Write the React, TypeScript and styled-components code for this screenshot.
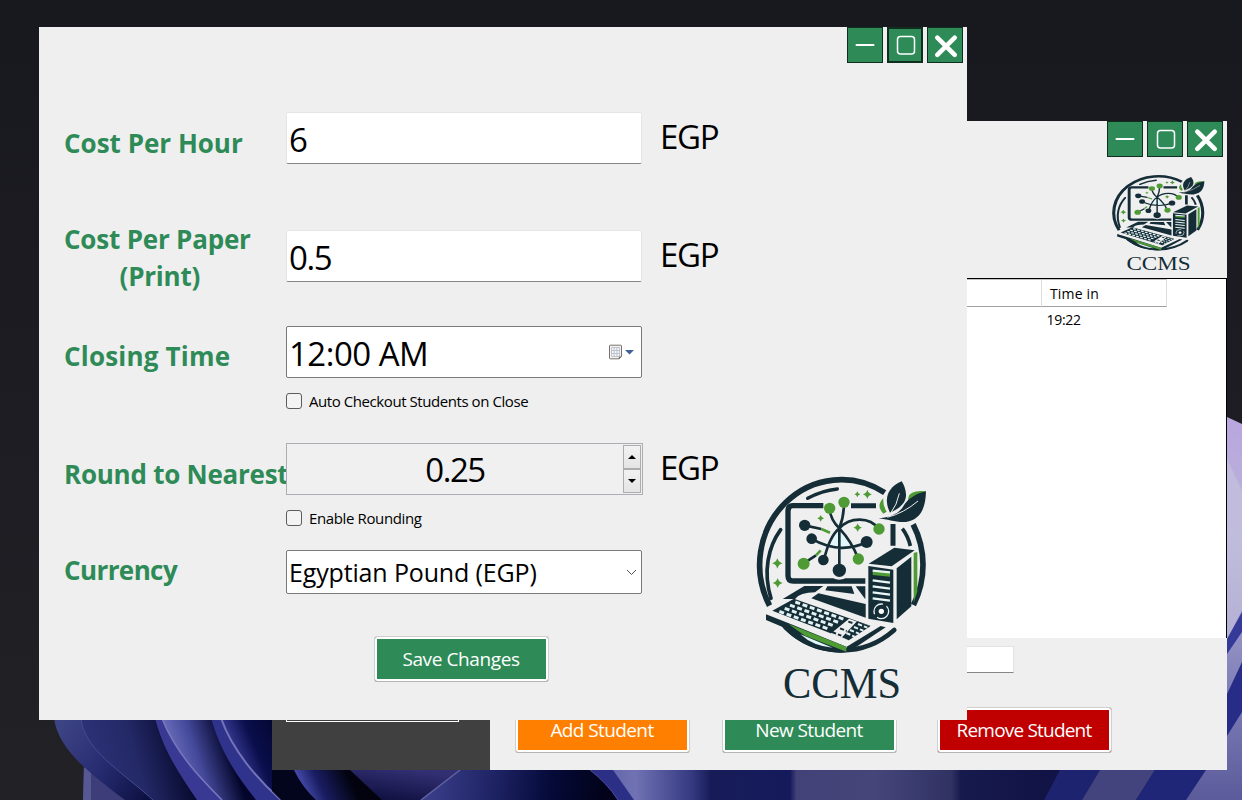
import React from "react";
import styled, { createGlobalStyle } from "styled-components";

const GlobalStyle = createGlobalStyle`
  * { box-sizing: border-box; }
  html, body { margin: 0; padding: 0; }
  body { font-family: "Open Sans", "Noto Sans", sans-serif; color: #000; background: #1c1b21; }
`;

const GREEN = "#2e8b57";
const PANEL = "#efefef";
const INK = "#142d36";
const LEAF = "#4e9a34";

const Desktop = styled.main`
  position: relative;
  width: 1242px;
  height: 800px;
  overflow: hidden;
`;

const Wallpaper = styled.svg`
  position: absolute;
  inset: 0;
`;

const SettingsWindow = styled.section`
  position: absolute;
  left: 39px;
  top: 27px;
  width: 928px;
  height: 693px;
  background: ${PANEL};
  display: flex;
  flex-direction: column;
`;

const MainWindow = styled.section`
  position: absolute;
  left: 272px;
  top: 121px;
  width: 955px;
  height: 649px;
  background: ${PANEL};
  display: flex;
`;

const CaptionBar = styled.header`
  display: flex;
  justify-content: flex-end;
  gap: 4px;
  padding-right: 4px;
  height: 36px;
  flex: none;
`;

const CaptionButton = styled.button<{ $focused?: boolean }>`
  width: 36px;
  height: 36px;
  padding: 0;
  display: block;
  border: ${(p) => (p.$focused ? 2 : 1)}px solid #0f2e1d;
  background: ${GREEN};
  svg { display: block; margin: ${(p) => (p.$focused ? 0 : 1)}px; }
`;

const SettingsBody = styled.div`
  display: flex;
  flex: 1;
  padding: 49px 27px 10px 25px;
`;

const Form = styled.form`
  width: 676px;
  display: flex;
  flex-direction: column;
`;

const FormRow = styled.div<{ $h: number; $after: number }>`
  display: grid;
  grid-template-columns: 222px 357px 1fr;
  grid-template-rows: ${(p) => p.$h}px;
  height: ${(p) => p.$h}px;
  margin-bottom: ${(p) => p.$after}px;
`;

const Label = styled.label<{ $track?: number; $drop?: number; $lift?: number }>`
  align-self: center;
  justify-self: start;
  color: ${GREEN};
  font-weight: 700;
  font-size: 26px;
  line-height: 37px;
  text-align: center;
  white-space: pre;
  letter-spacing: ${(p) => p.$track ?? 0}px;
  padding-top: ${(p) => p.$drop ?? 0}px;
  padding-bottom: ${(p) => p.$lift ?? 0}px;
`;

const SecondLine = styled.span`
  display: block;
  padding-left: 5px;
`;

const Unit = styled.span`
  align-self: center;
  padding: 0 0 2px 17px;
  font-size: 33px;
  line-height: 44px;
  letter-spacing: -1.3px;
`;

const Field = styled.div<{ $variant: "line" | "box" | "spin"; $size?: number; $track?: number; $top?: number }>`
  width: ${(p) => (p.$variant === "spin" ? 357 : 356)}px;
  height: 100%;
  display: flex;
  align-items: center;
  position: relative;
  white-space: pre;
  font-size: ${(p) => p.$size ?? 33}px;
  line-height: 40px;
  letter-spacing: ${(p) => p.$track ?? 0}px;
  padding: ${(p) => p.$top ?? 3}px 2px 0;
  background: ${(p) => (p.$variant === "spin" ? "#f0f0f0" : "#fff")};
  border: 1px solid ${(p) => (p.$variant === "line" ? "#e6e6e6" : p.$variant === "box" ? "#7a7a7a" : "#adadb3")};
  border-radius: ${(p) => (p.$variant === "spin" ? 0 : 2)}px;
  ${(p) => p.$variant === "line" && "border-bottom-color: #868686;"}
`;

const SpinValue = styled.span`
  flex: 1;
  text-align: center;
  letter-spacing: -1.5px;
  padding: 0 2px 2px 0;
`;

const SpinButtons = styled.div`
  align-self: stretch;
  width: 18px;
  margin: -2px -1px 1px 0;
  display: flex;
  flex-direction: column;
`;

const SpinButton = styled.button`
  flex: 1;
  padding: 0 1px 0 0;
  border: 1px solid #adadad;
  background: linear-gradient(#f2f2f2, #e4e4e4);
  display: flex;
  align-items: center;
  justify-content: center;
`;

const FieldIcon = styled.span<{ $up?: number; $right?: number }>`
  margin-left: auto;
  display: flex;
  padding: 0 ${(p) => p.$right ?? 4}px ${(p) => p.$up ?? 0}px 0;
`;

const CheckRow = styled.label<{ $after: number; $track: number }>`
  display: flex;
  align-items: center;
  gap: 7px;
  height: 16px;
  margin-left: 222px;
  margin-bottom: ${(p) => p.$after}px;
  font-size: 15px;
  line-height: 16px;
  letter-spacing: ${(p) => p.$track}px;
  white-space: pre;
`;

const CheckBox = styled.span`
  width: 16px;
  height: 16px;
  border: 1px solid #5c5c5c;
  border-radius: 3px;
  background: #f3f3f3;
`;

const ActionButton = styled.button<{ $bg: string; $track?: number }>`
  width: 175px;
  height: 46px;
  padding: 0 1px 1px 0;
  border: 1px solid #cfcfcf;
  border-bottom-color: #b5b5b5;
  border-radius: 3px;
  background: ${(p) => p.$bg};
  box-shadow: inset 0 0 0 2px #fff;
  color: #fff;
  font-family: inherit;
  font-size: 19px;
  line-height: 26px;
  letter-spacing: ${(p) => p.$track ?? 0}px;
  white-space: nowrap;
`;

const SaveSlot = styled.div`
  padding-left: 310px;
`;

const LogoSlot = styled.div`
  flex: 1;
  display: flex;
  align-items: flex-end;
`;

const Sidebar = styled.aside`
  width: 218px;
  background: #404040;
  display: flex;
  align-items: flex-end;
  padding: 0 0 48px 14px;
`;

const SidebarButton = styled.button`
  width: 173px;
  height: 45px;
  border: 1px solid #fff;
  background: #404040;
`;

const MainColumn = styled.div`
  flex: 1;
  display: flex;
  flex-direction: column;
`;

const Banner = styled.div`
  height: 121px;
  display: flex;
  justify-content: flex-end;
  padding: 13px 15px 0 0;
`;

const Table = styled.div`
  height: 360px;
  border-top: 1px solid #000;
  border-right: 1px solid #000;
  background: #fff;
  display: grid;
  grid-template-columns: 552px 125px;
  grid-template-rows: 28px 27px;
  font-size: 14px;
`;

const HeadCell = styled.div`
  border-right: 1px solid #dcdcdc;
  border-bottom: 1px solid #a0a0a0;
  border-top: 1px solid #c4c4c4;
  padding-left: 8px;
  line-height: 27px;
  letter-spacing: 0.15px;
`;

const Cell = styled.div`
  padding-left: 4.5px;
  line-height: 26px;
  letter-spacing: -0.3px;
`;

const SearchRow = styled.div`
  padding: 8px 0 34px 324px;
`;

const SearchBox = styled.div`
  width: 200px;
  height: 27px;
  background: #fff;
  border: 1px solid #e3e3e3;
  border-bottom-color: #868686;
`;

const ActionRow = styled.div`
  display: grid;
  grid-template-columns: 207px 215px 175px;
  padding-left: 25px;
`;

const MinimizeIcon = () => (
  <svg width="32" height="32" viewBox="0 0 32 32">
    <path d="M7.5 16H24.5" stroke="#fff" strokeWidth="2" strokeLinecap="round" />
  </svg>
);

const MaximizeIcon = () => (
  <svg width="32" height="32" viewBox="0 0 32 32">
    <rect x="8.5" y="7.5" width="17" height="17.5" rx="3" fill="none" stroke="#fff" strokeWidth="1.5" />
  </svg>
);

const CloseIcon = () => (
  <svg width="32" height="32" viewBox="0 0 32 32">
    <path d="M8.3 8.6L25.7 25.8M25.7 8.6L8.3 25.8" stroke="#fff" strokeWidth="4.6" strokeLinecap="round" />
  </svg>
);

const CalendarIcon = () => (
  <svg width="27" height="17" viewBox="0 0 27 17">
    <path d="M1.5 2q0-.8.8-.8h10.4q.8 0 .8.8v10.5l-2.5 2.3H2.3q-.8 0-.8-.8z" fill="#f4f4f6" stroke="#7b706b" />
    <path d="M3.5 3.5h8v9h-8zM3.5 6.5h8M3.5 9.5h8M6.2 3.5v9M8.9 3.5v9" fill="none" stroke="#b9c0cc" strokeWidth=".9" />
    <path d="M13.8 12.5h-3v2.8z" fill="#7b706b" />
    <path d="M17 6h9l-4.5 4.6z" fill="#44609c" />
  </svg>
);

const Caption = ({ focusMax }: { focusMax?: boolean }) => (
  <CaptionBar>
    <CaptionButton aria-label="Minimize"><MinimizeIcon /></CaptionButton>
    <CaptionButton aria-label="Maximize" $focused={focusMax}><MaximizeIcon /></CaptionButton>
    <CaptionButton aria-label="Close"><CloseIcon /></CaptionButton>
  </CaptionBar>
);

const Sparkle = ({ x, y, r }: { x: number; y: number; r: number }) => (
  <path
    fill={LEAF}
    d={`M${x} ${y - r}Q${x + r * 0.2} ${y - r * 0.2} ${x + r} ${y}Q${x + r * 0.2} ${y + r * 0.2} ${x} ${y + r}Q${x - r * 0.2} ${y + r * 0.2} ${x - r} ${y}Q${x - r * 0.2} ${y - r * 0.2} ${x} ${y - r}Z`}
  />
);

const keyRows = [0, 1, 2, 3];

const Logo = ({ width, height }: { width: number; height: number }) => (
  <svg width={width} height={height} viewBox="0 0 600 735" preserveAspectRatio="none">
    <g fill="none" stroke={INK}>
      <path d="M88.6 422A245 256 0 0 1 434 83" strokeWidth="17" />
      <path d="M519.4 178A245 256 0 0 1 520.4 420" strokeWidth="17" />
      <path d="M136.7 487A245 256 0 0 0 462.8 495" strokeWidth="14" strokeLinecap="round" />
      <path d="M93 400C68 320 85 245 122 194" strokeWidth="11" strokeLinecap="round" />
      <path d="M203 100Q245 77 292 72" strokeWidth="10" strokeLinecap="round" />
      <path d="M487 191Q504 213 511 243" strokeWidth="11" />
      <path d="M250 122H158Q144 122 144 138V332Q144 348 160 348H376" strokeWidth="16" />
      <path d="M333 122H408M459 177V242" strokeWidth="15" />
    </g>
    <path d="M268 243L298 190L328 240Q298 250 268 243Z" fill="#e2f7fa" />
    <path
      d="M268 130Q272 165 298 190Q312 155 312 112M298 190Q268 215 252 285M298 190V316M298 190Q336 230 355 282M298 190C330 155 390 155 416 192M214 221Q298 270 380 232M194 181L244 192M190 296L228 271"
      fill="none"
      stroke={INK}
      strokeWidth="8"
    />
    <path d="M244 192L270 203M228 271L242 256" stroke={LEAF} strokeWidth="8" />
    <g fill={LEAF}>
      <circle cx="269" cy="130" r="17" /><circle cx="312" cy="112" r="17" />
      <circle cx="417" cy="192" r="17" /><circle cx="355" cy="282" r="17" /><circle cx="191" cy="296" r="18" />
    </g>
    <g fill={INK}>
      <circle cx="194" cy="181" r="17" /><circle cx="215" cy="221" r="16" /><circle cx="250" cy="285" r="16" />
      <circle cx="298" cy="316" r="20" /><circle cx="380" cy="231" r="18" />
    </g>
    <path d="M273 332Q298 352 323 332" fill="none" stroke={PANEL} strokeWidth="5" />
    <Sparkle x={382} y={88} r={14} /><Sparkle x={352} y={88} r={9} /><Sparkle x={242} y={160} r={10} />
    <Sparkle x={353} y={188} r={13} /><Sparkle x={112} y={295} r={16} /><Sparkle x={113} y={354} r={15} />

    <path d="M430 100Q407 122 430 146L440 140Q428 122 430 100Z" fill={LEAF} />
    <path d="M505 98Q510 74 558 79L520 105L503 112Z" fill={LEAF} />
    <path d="M485 49C438 70 432 105 450 143C467 136 500 118 498 88Q496 65 485 49Z" fill={INK} />
    <path d="M558 79C530 85 503 101 489 125C474 151 440 157 416 160C443 163 468 173 498 171C541 164 557 130 558 79Z" fill={INK} />
    <path d="M478 85Q472 118 450 148M534 108Q492 144 442 157" fill="none" stroke={PANEL} strokeWidth="3" />

    <path d="M386 296L463 248L524 256L455 304Z" fill={INK} />
    <path d="M385 303L460 314V474L385 461Z" fill={INK} />
    <path d="M470 310L514 275V424L470 463Z" fill={INK} />
    <path d="M521 264L532 261V380L521 412Z" fill={LEAF} />
    <path d="M398 318L450 323V335L398 330Z" fill={LEAF} />
    <path d="M398 317L450 322M398 346L450 353M398 364L450 371M398 382L450 389M398 400L450 407" stroke="#e8f6f6" strokeWidth="7" />
    <circle cx="424" cy="439" r="22" fill="none" stroke="#e8f6f6" strokeWidth="4" strokeDasharray="48 12" />
    <circle cx="424" cy="439" r="8" fill="#fff" />

    <path d="M193 363H250L225 382Q180 382 165 402H128Z" fill={INK} />
    <path d="M262 364H335L343 387L256 376ZM347 364H376V403Z" fill={INK} />
    <path d="M235 385L377 417V458L214 400Z" fill={INK} />

    <path d="M162 401L391 482L326 526L97 437Z" fill={INK} />
    <g stroke="#e2f2f3" strokeWidth="9" strokeDasharray="15 8">
      {keyRows.map((i) => (
        <path key={i} d={`M${166 - i * 16} ${411 + i * 9.5}L${312 - i * 16} ${463 + i * 9.5}`} />
      ))}
    </g>
    <path d="M327 461L391 484L326 527L272 506Z" fill={PANEL} />
    <path d="M351 469L391 484L326 526L306 517Z" fill={INK} />
    <g stroke="#e2f2f3" strokeWidth="6" strokeDasharray="13 6">
      <path d="M354 477L382 488M342 486L370 497M330 495L357 506M319 504L344 515" />
      <path d="M276 501L304 512M300 490L320 498M325 470L343 476" stroke={INK} />
    </g>
    <path d="M78 448L150 476L319 545V562C250 565 180 543 126 485L78 465Z" fill={INK} />
    <path d="M145 477L319 545V560L195 512Z" fill={LEAF} />
    <path d="M181 508L278 548Q220 544 181 508Z" fill="#e2f7fa" />
    <path d="M320 545L422 483L437 487L325 562Z" fill={INK} />
    <text x="129" y="700" fontFamily="'Liberation Serif', serif" fontSize="136" textLength="354" lengthAdjust="spacingAndGlyphs" fill={INK}>CCMS</text>
  </svg>
);

const Bloom = () => (
  <Wallpaper width="1242" height="800" viewBox="0 0 1242 800">
    <defs>
      <linearGradient id="sky" x1="0" y1="0" x2="0" y2="1">
        <stop offset="0" stopColor="#18181f" /><stop offset="1" stopColor="#222126" />
      </linearGradient>
      <linearGradient id="petalA" gradientUnits="userSpaceOnUse" x1="60" y1="725" x2="160" y2="790">
        <stop offset="0" stopColor="#3d4484" /><stop offset=".5" stopColor="#262b70" /><stop offset="1" stopColor="#090d3b" />
      </linearGradient>
      <linearGradient id="petalB" gradientUnits="userSpaceOnUse" x1="85" y1="745" x2="175" y2="720">
        <stop offset="0" stopColor="#2c3277" /><stop offset=".5" stopColor="#232866" /><stop offset="1" stopColor="#070a2e" />
      </linearGradient>
      <linearGradient id="petalC" gradientUnits="userSpaceOnUse" x1="172" y1="750" x2="224" y2="733">
        <stop offset="0" stopColor="#686bb8" /><stop offset=".4" stopColor="#45499b" /><stop offset="1" stopColor="#03062a" />
      </linearGradient>
      <linearGradient id="petalD" gradientUnits="userSpaceOnUse" x1="232" y1="750" x2="285" y2="728">
        <stop offset="0" stopColor="#373a94" /><stop offset=".4" stopColor="#0a0e4b" /><stop offset="1" stopColor="#02052b" />
      </linearGradient>
      <linearGradient id="petalE" gradientUnits="userSpaceOnUse" x1="400" y1="768" x2="395" y2="802">
        <stop offset="0" stopColor="#332f73" /><stop offset="1" stopColor="#101040" />
      </linearGradient>
      <linearGradient id="petalF" gradientUnits="userSpaceOnUse" x1="303" y1="787" x2="345" y2="768">
        <stop offset="0" stopColor="#4347a5" /><stop offset=".35" stopColor="#191d62" /><stop offset="1" stopColor="#02030f" />
      </linearGradient>
      <linearGradient id="petalG" gradientUnits="userSpaceOnUse" x1="430" y1="780" x2="600" y2="800">
        <stop offset="0" stopColor="#393d88" /><stop offset=".4" stopColor="#1c2161" /><stop offset=".7" stopColor="#050a3a" /><stop offset="1" stopColor="#02031a" />
      </linearGradient>
      <linearGradient id="strip" gradientUnits="userSpaceOnUse" x1="610" y1="0" x2="1242" y2="0">
        <stop offset="0" stopColor="#6466ab" /><stop offset=".04" stopColor="#7072b3" /><stop offset=".13" stopColor="#343981" />
        <stop offset=".16" stopColor="#171c58" /><stop offset=".285" stopColor="#151a5c" /><stop offset=".295" stopColor="#424278" />
        <stop offset=".42" stopColor="#45457a" /><stop offset=".54" stopColor="#303262" /><stop offset=".555" stopColor="#171a4d" />
        <stop offset=".69" stopColor="#111345" /><stop offset="1" stopColor="#1d2370" />
      </linearGradient>
      <linearGradient id="edge" x1="0" y1="0" x2="0" y2="1">
        <stop offset="0" stopColor="#b9a6df" /><stop offset=".3" stopColor="#b9b4d8" /><stop offset=".75" stopColor="#7a7ab5" /><stop offset="1" stopColor="#5b5b9b" />
      </linearGradient>
    </defs>
    <rect width="1242" height="800" fill="url(#sky)" />
    <path d="M84 760H180V800H83Z" fill="#3c3d79" />
    <path d="M84 768H91V800H83Z" fill="#565991" />
    <path d="M54 718C58 748 85 770 125 800H290V718Z" fill="url(#petalA)" />
    <path d="M81 718C84 750 120 770 153 800H290V718Z" fill="url(#petalB)" />
    <path d="M81 718C84 750 120 770 153 800" fill="none" stroke="#454a8e" strokeWidth="1" />
    <path d="M155 718C163 750 180 775 197 800H290V718Z" fill="#393993" />
    <path d="M161 718C175 752 200 778 223 800H290V718Z" fill="url(#petalC)" />
    <path d="M162 718C175 752 200 778 222 800" fill="none" stroke="#7777bc" strokeWidth="1.5" />
    <path d="M211 718C221 754 240 780 256 800H300V718Z" fill="#30338b" />
    <path d="M221 718C232 750 258 780 281 800H320V718Z" fill="url(#petalD)" />
    <path d="M221 718C232 750 258 780 281 800" fill="none" stroke="#7375b8" strokeWidth="2" />
    <path d="M272 770H1242V800H281L272 791Z" fill="#03051c" />
    <path d="M294 770Q302 787 316 800H400V770Z" fill="url(#petalF)" />
    <path d="M350 770L382 800H421L460 770Z" fill="url(#petalE)" />
    <path d="M421 800L460 770H620V800Z" fill="url(#petalG)" />
    <path d="M460 770L421 800" stroke="#6262a1" strokeWidth="1.5" />
    <path d="M612 770H1242V800H626Z" fill="url(#strip)" />
    <path d="M590 770Q607 783 618 800H634L613 770Z" fill="#2b2f86" />
    <path d="M590 770Q607 783 618 800" fill="none" stroke="#4a4ea6" />
    <path d="M1060 770L1044 800H1082L1100 770Z" fill="#1d236e" />
    <path d="M1100 770L1082 800H1136L1155 770Z" fill="#43437d" />
    <path d="M1155 770L1136 800H1186L1206 770Z" fill="#1f2678" />
    <path d="M1227 417L1242 424V800H1186L1206 770H1227Z" fill="url(#edge)" />
    <path d="M1227 459L1242 490V610L1227 640Z" fill="#c4c1df" opacity=".65" />
    <path d="M1227 639L1242 612V632L1227 654Z" fill="#353997" />
    <path d="M1227 694L1242 662V712L1227 736Z" fill="#272c86" />
  </Wallpaper>
);

export default function App() {
  return (
    <Desktop>
      <GlobalStyle />
      <Bloom />
      <MainWindow>
        <Sidebar><SidebarButton aria-label="Sidebar action" /></Sidebar>
        <MainColumn>
          <Caption />
          <Banner><Logo width={109} height={105} /></Banner>
          <Table>
            <HeadCell />
            <HeadCell>Time in</HeadCell>
            <Cell />
            <Cell>19:22</Cell>
          </Table>
          <SearchRow><SearchBox /></SearchRow>
          <ActionRow>
            <ActionButton $bg="#ff8000" $track={-0.6}>Add Student</ActionButton>
            <ActionButton $bg={GREEN} $track={-0.6}>New Student</ActionButton>
            <ActionButton $bg="#c00000" $track={-0.8}>Remove Student</ActionButton>
          </ActionRow>
        </MainColumn>
      </MainWindow>

      <SettingsWindow>
        <Caption focusMax />
        <SettingsBody>
          <Form>
            <FormRow $h={52} $after={66}>
              <Label $drop={10}>Cost Per Hour</Label>
              <Field $variant="line" $track={-1.4}>6</Field>
              <Unit>EGP</Unit>
            </FormRow>
            <FormRow $h={52} $after={44}>
              <Label $track={-0.2} $drop={4}>Cost Per Paper<SecondLine>(Print)</SecondLine></Label>
              <Field $variant="line" $track={-1.4}>0.5</Field>
              <Unit>EGP</Unit>
            </FormRow>
            <FormRow $h={52} $after={15}>
              <Label $track={0.2} $drop={9}>Closing Time</Label>
              <Field $variant="box" $track={-0.5}>
                12:00 AM
                <FieldIcon $up={3}><CalendarIcon /></FieldIcon>
              </Field>
            </FormRow>
            <CheckRow $after={34} $track={-0.43}><CheckBox />Auto Checkout Students on Close</CheckRow>
            <FormRow $h={52} $after={15}>
              <Label $track={-0.25} $drop={10}>Round to Nearest</Label>
              <Field $variant="spin">
                <SpinValue>0.25</SpinValue>
                <SpinButtons>
                  <SpinButton type="button" aria-label="Increase">
                    <svg width="8" height="4" viewBox="0 0 8 4"><path d="M0 4L4 0L8 4Z" /></svg>
                  </SpinButton>
                  <SpinButton type="button" aria-label="Decrease">
                    <svg width="8" height="4" viewBox="0 0 8 4"><path d="M0 0H8L4 4Z" /></svg>
                  </SpinButton>
                </SpinButtons>
              </Field>
              <Unit>EGP</Unit>
            </FormRow>
            <CheckRow $after={24} $track={-0.37}><CheckBox />Enable Rounding</CheckRow>
            <FormRow $h={44} $after={42}>
              <Label $track={-0.6} $lift={3}>Currency</Label>
              <Field $variant="box" $size={25} $track={-0.15} $top={0}>
                Egyptian Pound (EGP)
                <FieldIcon $right={2}>
                  <svg width="11" height="7" viewBox="0 0 11 7"><path d="M1 1L5.5 5.5L10 1" fill="none" stroke="#555" /></svg>
                </FieldIcon>
              </Field>
            </FormRow>
            <SaveSlot><ActionButton type="button" $bg={GREEN} $track={-0.4}>Save Changes</ActionButton></SaveSlot>
          </Form>
          <LogoSlot><Logo width={200} height={245} /></LogoSlot>
        </SettingsBody>
      </SettingsWindow>
    </Desktop>
  );
}
